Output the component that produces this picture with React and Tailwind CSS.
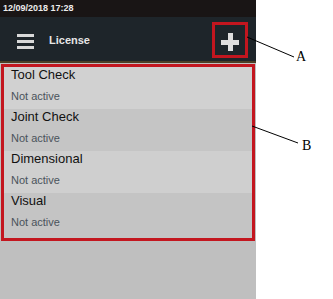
import React from "react";

const rows = [
  { title: "Tool Check", bg: "bg-[#d1d1d1]" },
  { title: "Joint Check", bg: "bg-[#c5c5c5]" },
  { title: "Dimensional", bg: "bg-[#cfcfcf]" },
  { title: "Visual", bg: "bg-[#c4c4c4]" },
];

export default function App() {
  return (
    <div className="relative w-[333px] h-[299px] bg-white flex overflow-hidden" style={{ fontFamily: '"Liberation Sans", Arial, sans-serif' }}>
      <div className="w-[256px] h-full flex flex-col bg-[#bfbfbf]">
        <div className="h-[17px] bg-[#191515] flex items-center px-[3px]">
          <span className="text-[9px] font-bold text-[#ececec] leading-none">12/09/2018 17:28</span>
        </div>
        <div className="h-[44px] bg-[#1e252a] flex items-center">
          <div className="ml-[17px] mt-[4px] flex flex-col gap-[3px]">
            <div className="w-[17px] h-[3px] bg-[#d9d9d9]" />
            <div className="w-[17px] h-[3px] bg-[#d9d9d9]" />
            <div className="w-[17px] h-[3px] bg-[#d9d9d9]" />
          </div>
          <span className="ml-[15px] mt-[2px] text-[11px] font-bold text-[#e6e6e6]">License</span>
          <div className="ml-auto mr-[8px] mt-[2px] w-[36px] h-[36px] border-[3px] border-[#c3161f] flex items-center justify-center">
            <div className="relative w-[18px] h-[18px] mt-[4px]">
              <div className="absolute left-0 top-[6.5px] w-[18px] h-[5px] bg-[#dedede]" />
              <div className="absolute top-0 left-[6.5px] w-[5px] h-[18px] bg-[#dedede]" />
            </div>
          </div>
        </div>
        <div className="h-[2px] bg-[#4a3f26]" />
        <div className="mt-[1px] ml-[1px] w-[254px] h-[177px] border-[3px] border-[#c3161f] flex flex-col">
          {rows.map((r, i) => (
            <div key={i} className={`h-[42px] ${r.bg} pl-[7px] flex flex-col`}>
              <span className="text-[13px] leading-[16px] text-[#111111]">{r.title}</span>
              <span className="mt-[7px] text-[11px] leading-[13px] text-[#4a535b]">Not active</span>
            </div>
          ))}
          <div className="flex-1 bg-[#c4c4c4]" />
        </div>
      </div>
      <svg className="absolute left-0 top-0" width="333" height="299">
        <line x1="247" y1="37" x2="294" y2="57" stroke="#000" strokeWidth="1" />
        <line x1="252" y1="126" x2="298" y2="143" stroke="#000" strokeWidth="1" />
      </svg>
      <span className="absolute left-[296px] top-[49px] text-[14px] leading-[16px] text-black" style={{ fontFamily: '"Liberation Serif", serif' }}>A</span>
      <span className="absolute left-[302px] top-[138px] text-[14px] leading-[16px] text-black" style={{ fontFamily: '"Liberation Serif", serif' }}>B</span>
    </div>
  );
}
